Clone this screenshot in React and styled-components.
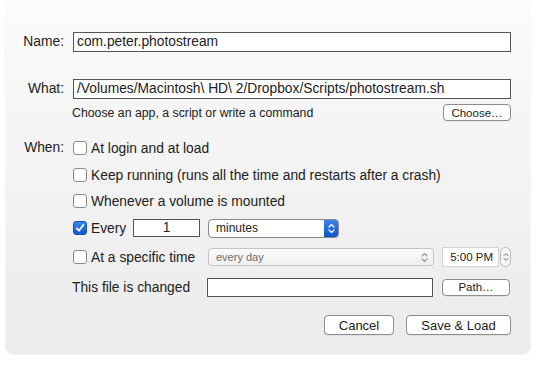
import React from 'react';
import styled, { createGlobalStyle } from 'styled-components';

const GlobalStyle = createGlobalStyle`
  html, body {
    margin: 0;
    padding: 0;
    background: #ffffff;
  }
  body {
    font-family: "Liberation Sans", Arial, sans-serif;
    color: #222;
  }
`;

const Page = styled.div`
  width: 539px;
  height: 367px;
  padding: 0 9px 0 6px;
  box-sizing: border-box;
`;

const Panel = styled.div`
  width: 524px;
  height: 353px;
  box-sizing: border-box;
  padding: 32px 19px 18px 0;
  background: linear-gradient(#fbfbfb, #ebebeb);
  border-radius: 0 0 6px 6px;
  box-shadow: 0 1px 2px rgba(0, 0, 0, 0.12);
  display: flex;
  flex-direction: column;
`;

const FieldRow = styled.div`
  display: grid;
  grid-template-columns: 58px 1fr;
  column-gap: 9px;
  align-items: center;
  margin-top: ${p => p.$top || 0}px;
`;

const Label = styled.div`
  font-size: 13.8px;
  text-align: right;
  align-self: ${p => (p.$top ? 'start' : 'center')};
  line-height: 20px;
`;

const TextField = styled.div`
  height: ${p => p.$h || 20}px;
  box-sizing: border-box;
  border: 1px solid #555;
  background: #fff;
  font-size: 13.8px;
  line-height: ${p => (p.$h || 20) - 2}px;
  padding: 0 3px;
  width: ${p => (p.$w ? p.$w + 'px' : 'auto')};
  text-align: ${p => p.$align || 'left'};
  white-space: nowrap;
  overflow: hidden;
`;

const HelpRow = styled.div`
  display: flex;
  align-items: center;
  justify-content: space-between;
  height: 19px;
  margin-top: 4px;
  margin-left: -1px;
`;

const Help = styled.span`
  font-size: 12.3px;
`;

const Button = styled.button`
  font-family: "Liberation Sans", Arial, sans-serif;
  font-size: ${p => p.$size || 12}px;
  color: #222;
  background: #fff;
  border: 1px solid #8d8d8d;
  border-radius: 4px;
  height: ${p => p.$h || 17}px;
  width: ${p => p.$w}px;
  padding: 0;
  box-shadow: 0 0.5px 0.5px rgba(0, 0, 0, 0.1);
`;

const Options = styled.div`
  display: flex;
  flex-direction: column;
`;

const OptionRow = styled.div`
  display: flex;
  align-items: center;
  height: 20px;
  margin-top: ${p => p.$top || 0}px;
`;

const CheckLabel = styled.label`
  display: flex;
  align-items: center;
  gap: 4px;
  font-size: 13.8px;
  width: ${p => (p.$w ? p.$w + 'px' : 'auto')};
  flex: none;
  white-space: nowrap;
`;

const PlainLabel = styled.span`
  font-size: 13.8px;
  width: 135px;
  flex: none;
  margin-left: -1px;
`;

const Box = styled.span`
  width: 14px;
  height: 14px;
  box-sizing: border-box;
  border-radius: 3px;
  flex: none;
  display: flex;
  align-items: center;
  justify-content: center;
  border: 1px solid ${p => (p.$checked ? '#1b4fb0' : '#8a8a8a')};
  background: ${p => (p.$checked ? 'linear-gradient(#3b86ec, #1158cf)' : '#fff')};
`;

const Select = styled.div`
  display: flex;
  align-items: center;
  width: ${p => p.$w}px;
  height: ${p => (p.$disabled ? 18 : 19)}px;
  box-sizing: border-box;
  border: 1px solid ${p => (p.$disabled ? '#c4c4c4' : '#8a8a8a')};
  border-radius: 4px;
  background: ${p => (p.$disabled ? 'linear-gradient(#fafafa, #f0f0f0)' : '#fff')};
  font-size: ${p => (p.$disabled ? 11 : 12)}px;
  color: ${p => (p.$disabled ? '#6e6e6e' : '#222')};
  overflow: hidden;
  flex: none;
`;

const SelectText = styled.span`
  flex: 1;
  padding-left: 7px;
`;

const SelectArrow = styled.span`
  width: ${p => (p.$blue ? 15 : 18)}px;
  align-self: stretch;
  display: flex;
  align-items: center;
  justify-content: center;
  background: ${p => (p.$blue ? 'linear-gradient(#3b86ec, #0f52c4)' : 'transparent')};
  margin: ${p => (p.$blue ? '-1px -1px -1px 0' : '0')};
  border-radius: ${p => (p.$blue ? '0 4px 4px 0' : '0')};
`;

const TimeField = styled.div`
  width: 57px;
  height: 20px;
  box-sizing: border-box;
  border: 1px solid #d2d2d2;
  background: #fff;
  font-size: 11.5px;
  line-height: 18px;
  text-align: right;
  padding-right: 5px;
  margin-left: 8px;
  flex: none;
`;

const Stepper = styled.div`
  width: 11px;
  height: 20px;
  box-sizing: border-box;
  margin-left: 1px;
  border: 1px solid #b9b9b9;
  border-radius: 6px;
  background: #f6f6f6;
  display: flex;
  align-items: center;
  justify-content: center;
`;

const Spacer = styled.span`
  width: ${p => p.$w}px;
  flex: none;
`;

const Footer = styled.div`
  display: flex;
  justify-content: flex-end;
  gap: 12px;
  margin-top: 18px;
`;

const Chevrons = ({ color = '#fff', w = 7, h = 11 }) => (
  <svg width={w} height={h} viewBox="0 0 7 11" fill="none">
    <path d="M1 4 L3.5 1.5 L6 4" stroke={color} strokeWidth="1.2" strokeLinecap="round" strokeLinejoin="round" />
    <path d="M1 7 L3.5 9.5 L6 7" stroke={color} strokeWidth="1.2" strokeLinecap="round" strokeLinejoin="round" />
  </svg>
);

const Check = () => (
  <svg width="10" height="10" viewBox="0 0 10 10" fill="none">
    <path d="M1.8 5.4 L4 7.8 L8.4 1.8" stroke="#fff" strokeWidth="1.7" strokeLinecap="round" strokeLinejoin="round" />
  </svg>
);

const Checkbox = ({ checked, children, width }) => (
  <CheckLabel $w={width}>
    <Box $checked={checked}>{checked && <Check />}</Box>
    {children}
  </CheckLabel>
);

const App = () => {
  return (
    <Page>
      <GlobalStyle />
      <Panel>
        <FieldRow>
          <Label>Name:</Label>
          <TextField>com.peter.photostream</TextField>
        </FieldRow>

        <FieldRow $top={27}>
          <Label>What:</Label>
          <TextField>/Volumes/Macintosh\ HD\ 2/Dropbox/Scripts/photostream.sh</TextField>
        </FieldRow>
        <FieldRow>
          <span />
          <HelpRow>
            <Help>Choose an app, a script or write a command</Help>
            <Button $w={68} $size={11.5}>Choose…</Button>
          </HelpRow>
        </FieldRow>

        <FieldRow $top={16}>
          <Label $top>When:</Label>
          <Options>
            <OptionRow>
              <Checkbox>At login and at load</Checkbox>
            </OptionRow>
            <OptionRow $top={7}>
              <Checkbox>Keep running (runs all the time and restarts after a crash)</Checkbox>
            </OptionRow>
            <OptionRow $top={6}>
              <Checkbox>Whenever a volume is mounted</Checkbox>
            </OptionRow>
            <OptionRow $top={7}>
              <Checkbox checked width={60}>Every</Checkbox>
              <TextField $h={18} $w={67} $align="center">1</TextField>
              <Spacer $w={8} />
              <Select $w={131}>
                <SelectText>minutes</SelectText>
                <SelectArrow $blue>
                  <Chevrons />
                </SelectArrow>
              </Select>
            </OptionRow>
            <OptionRow $top={9}>
              <Checkbox width={135}>At a specific time</Checkbox>
              <Select $w={226} $disabled>
                <SelectText>every day</SelectText>
                <SelectArrow>
                  <Chevrons color="#9a9a9a" />
                </SelectArrow>
              </Select>
              <TimeField>5:00 PM</TimeField>
              <Stepper>
                <Chevrons color="#9a9a9a" w={6} h={12} />
              </Stepper>
            </OptionRow>
            <OptionRow $top={10}>
              <PlainLabel>This file is changed</PlainLabel>
              <TextField $w={226} $h={19} />
              <Spacer $w={9} />
              <Button $w={68} $size={11.5}>Path…</Button>
            </OptionRow>
          </Options>
        </FieldRow>

        <Footer>
          <Button $w={70} $h={20} $size={13}>Cancel</Button>
          <Button $w={105} $h={20} $size={13}>Save &amp; Load</Button>
        </Footer>
      </Panel>
    </Page>
  );
};

export default App;
